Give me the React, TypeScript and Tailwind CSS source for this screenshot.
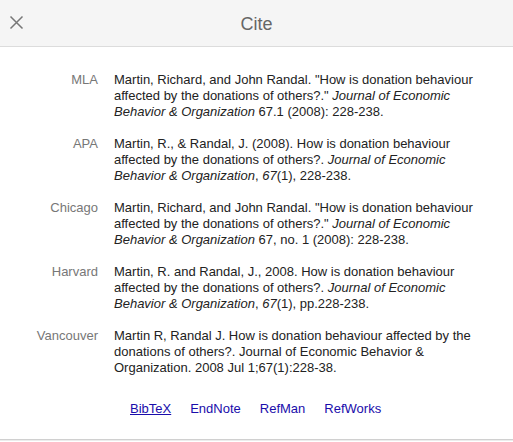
const rows: { label: string; body: React.ReactNode }[] = [
  {
    label: "MLA",
    body: (
      <>
        Martin, Richard, and John Randal. "How is donation behaviour affected by the donations of others?."{" "}
        <i>Journal of Economic Behavior &amp; Organization</i> 67.1 (2008): 228-238.
      </>
    ),
  },
  {
    label: "APA",
    body: (
      <>
        Martin, R., &amp; Randal, J. (2008). How is donation behaviour affected by the donations of others?.{" "}
        <i>Journal of Economic Behavior &amp; Organization</i>, <i>67</i>(1), 228-238.
      </>
    ),
  },
  {
    label: "Chicago",
    body: (
      <>
        Martin, Richard, and John Randal. "How is donation behaviour affected by the donations of others?."{" "}
        <i>Journal of Economic Behavior &amp; Organization</i> 67, no. 1 (2008): 228-238.
      </>
    ),
  },
  {
    label: "Harvard",
    body: (
      <>
        Martin, R. and Randal, J., 2008. How is donation behaviour affected by the donations of others?.{" "}
        <i>Journal of Economic Behavior &amp; Organization</i>, <i>67</i>(1), pp.228-238.
      </>
    ),
  },
  {
    label: "Vancouver",
    body: (
      <>
        Martin R, Randal J. How is donation behaviour affected by the donations of others?. Journal of Economic
        Behavior &amp; Organization. 2008 Jul 1;67(1):228-38.
      </>
    ),
  },
];

const links = ["BibTeX", "EndNote", "RefMan", "RefWorks"];

export default function App() {
  return (
    <div className="w-[513px] h-[442px] bg-white font-['Liberation_Sans',Arial,sans-serif]">
      {/* HEADER */}
      <div className="relative flex h-[47px] items-center justify-center border-b border-[#dcdcdc] bg-[#f5f5f5]">
        <button className="absolute left-[9px] top-[15px] flex h-[15px] w-[15px] items-center justify-center text-[#777]">
          <svg width="15" height="15" viewBox="0 0 15 15" fill="none" stroke="currentColor" strokeWidth="1.5">
            <path d="M1.5 1.5 L13.5 13.5 M13.5 1.5 L1.5 13.5" />
          </svg>
        </button>
        <div className="pt-[2px] text-[18px] text-[#666]">Cite</div>
      </div>

      {/* CITATIONS */}
      <div className="h-[393px] border-b border-[#d0d0d0] pt-[25px] text-[13px] leading-[16px]">
        {rows.map((r) => (
          <div key={r.label} className="mb-4 flex">
            <div className="w-[98px] shrink-0 text-right text-[#777]">{r.label}</div>
            <div className="ml-4 w-[376px] text-[#222]">{r.body}</div>
          </div>
        ))}

        <div className="mt-[25px] flex gap-[19px] pl-[130px] text-[#1a0dab]">
          {links.map((l, i) => (
            <a key={l} href="#" className={i === 0 ? "underline" : ""}>
              {l}
            </a>
          ))}
        </div>
      </div>
      <div className="h-px bg-[#ececec]" />
    </div>
  );
}
